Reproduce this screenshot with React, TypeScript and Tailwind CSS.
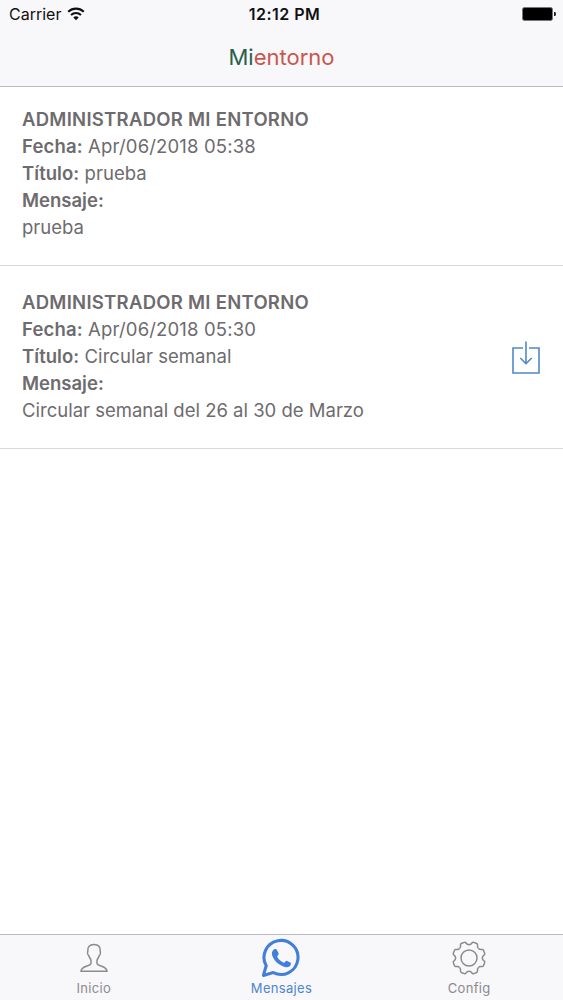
import React from 'react'

interface IMessage {
 author: string
 date: string
 title: string
 body: string
 attachment?: boolean
}

interface ITab {
 label: string
 icon: React.ReactNode
 active?: boolean
}

const messages: IMessage[] = [
 {
  author: 'ADMINISTRADOR MI ENTORNO',
  date: 'Apr/06/2018 05:38',
  title: 'prueba',
  body: 'prueba',
 },
 {
  author: 'ADMINISTRADOR MI ENTORNO',
  date: 'Apr/06/2018 05:30',
  title: 'Circular semanal',
  body: 'Circular semanal del 26 al 30 de Marzo',
  attachment: true,
 },
]

const WifiIcon = () => (
 <svg width="18" height="14" viewBox="0 0 18 14" fill="none" stroke="#111" strokeWidth="2.1">
  <path d="M1.2 4.8C5.6 .6 12.4 .6 16.8 4.8" />
  <path d="M4 8C6.9 5.3 11.1 5.3 14 8" />
  <path d="M6.3 10.4C7.8 9 10.2 9 11.7 10.4L9 13.2Z" fill="#111" stroke="none" />
 </svg>
)

const BatteryIcon = () => (
 <svg width="34" height="14" viewBox="0 0 34 14">
  <rect x=".5" y=".5" width="30" height="13" rx="2" fill="#000" stroke="#777" />
  <path d="M32 5h1q1 0 1 2t-1 2h-1z" fill="#222" />
 </svg>
)

const DownloadIcon = () => (
 <svg width="30" height="34" viewBox="0 0 30 34" fill="none" stroke="#5088c9" strokeWidth="1.6">
  <path d="M12 7H2V32H28V7H18" />
  <path d="M15 .5V22.5M9.3 17L15 22.7L20.7 17" />
 </svg>
)

const PersonIcon = () => (
 <svg width="38" height="38" viewBox="0 0 38 38" fill="none" stroke="#8b8b8d" strokeWidth="1.5">
  <path d="M19 5.4C14.4 5.4 12.5 8.2 12.8 12.2C12.2 13.4 12.8 15.8 13.8 16.7C14.4 18.9 16 20 16 21.6V24.2C15.8 27.8 6.4 26.2 6 32.2H32C31.6 26.2 22.2 27.8 22 24.2V21.6C22 20 23.6 18.9 24.2 16.7C25.2 15.8 25.8 13.4 25.2 12.2C25.5 8.2 23.6 5.4 19 5.4Z" />
 </svg>
)

const WhatsappIcon = () => (
 <svg width="40" height="40" viewBox="0 0 40 40">
  <path
   d="M2.4 37.4L5.2 27.8A17 17 0 1 1 12.3 34.6Z"
   fill="none"
   stroke="#437fd9"
   strokeWidth="3.1"
   strokeLinejoin="round"
  />
  <path
   d="M12.1 12.2C13 11 14.7 10.6 15.6 11.4L17.7 15.6C18 16.5 16 18.1 16.2 18.8C17.6 21.5 19.8 23.5 22.7 24.7C23.6 25 24.8 22.4 25.7 22.7L29.7 24.7C30.4 25.5 29.7 27.5 28.4 28.5C25.7 30.3 21.4 28.5 18.1 26.3C14.8 24 12.1 20.4 11.2 17.4C10.6 15.3 11 13.5 12.1 12.2Z"
   fill="#437fd9"
  />
 </svg>
)

// one tooth, repeated every 45 degrees
const tooth =
 'M-5.1 -12.3C-3.9 -12.8 -3.2 -13.8 -3 -15Q-2.7 -16.3 -1.6 -16.3H1.6Q2.7 -16.3 3 -15C3.2 -13.8 3.9 -12.8 5.1 -12.3'

const GearIcon = () => (
 <svg width="38" height="38" viewBox="-19 -19 38 38" fill="none" stroke="#8b8b8d" strokeWidth="1.5">
  {[22.5, 67.5, 112.5, 157.5, 202.5, 247.5, 292.5, 337.5].map((angle) => (
   <path key={angle} d={tooth} transform={`rotate(${angle})`} />
  ))}
  <circle r="8" />
 </svg>
)

const tabs: ITab[] = [
 { label: 'Inicio', icon: <PersonIcon /> },
 { label: 'Mensajes', icon: <WhatsappIcon />, active: true },
 { label: 'Config', icon: <GearIcon /> },
]

const Message: React.FC<IMessage> = ({ author, date, title, body, attachment }) => (
 <li className="flex items-center justify-between border-b border-[#d9d9db] px-[22px] pt-[22.5px] pb-[23.5px] first:pt-[18.5px]">
  <div className="text-[18.5px] leading-[27.2px] text-[#6d6b6e]">
   <h2 className="font-semibold tracking-[0.27px]">{author}</h2>
   <p className="tracking-[0.15px]"><b className="font-semibold">Fecha:</b> {date}</p>
   <p className="tracking-[0.05px]"><b className="font-semibold">Título:</b> {title}</p>
   <p><b className="font-semibold">Mensaje:</b></p>
   <p>{body}</p>
  </div>
  {attachment && (
   <button aria-label="Descargar" className="pt-[2px]">
    <DownloadIcon />
   </button>
  )}
 </li>
)

const App: React.FC = () => (
 <div className="flex h-screen flex-col bg-white font-['Inter',sans-serif]">
  <header className="h-[87px] border-b border-[#bdbbc0] bg-[#f8f7fa]">
   <div className="grid h-7 grid-cols-3 items-center pl-[9px] pr-[7px] text-[16px] text-[#111]">
    <div className="flex items-center gap-[6px]">
     <span>Carrier</span>
     <WifiIcon />
    </div>
    <span className="pl-1 text-center font-semibold tracking-[0.5px]">12:12 PM</span>
    <div className="flex justify-end">
     <BatteryIcon />
    </div>
   </div>
   <h1 className="text-center text-[22px] leading-[59px] text-[#c8574f]">
    <span className="text-[#295f4b]">Mi</span>entorno
   </h1>
  </header>
  <ul className="flex-1">
   {messages.map((message) => (
    <Message key={message.date} {...message} />
   ))}
  </ul>
  <nav className="grid h-[66px] grid-cols-3 border-t border-[#bdbbc0] bg-[#f8f7fa]">
   {tabs.map(({ label, icon, active }) => (
    <button
     key={label}
     className={`flex flex-col items-center text-[13px] leading-[14px] tracking-wide ${active ? 'text-[#4d86cf]' : 'text-[#8b8b8d]'}`}
    >
     <span className="flex h-[46px] items-center">{icon}</span>
     {label}
    </button>
   ))}
  </nav>
 </div>
)

export default App
